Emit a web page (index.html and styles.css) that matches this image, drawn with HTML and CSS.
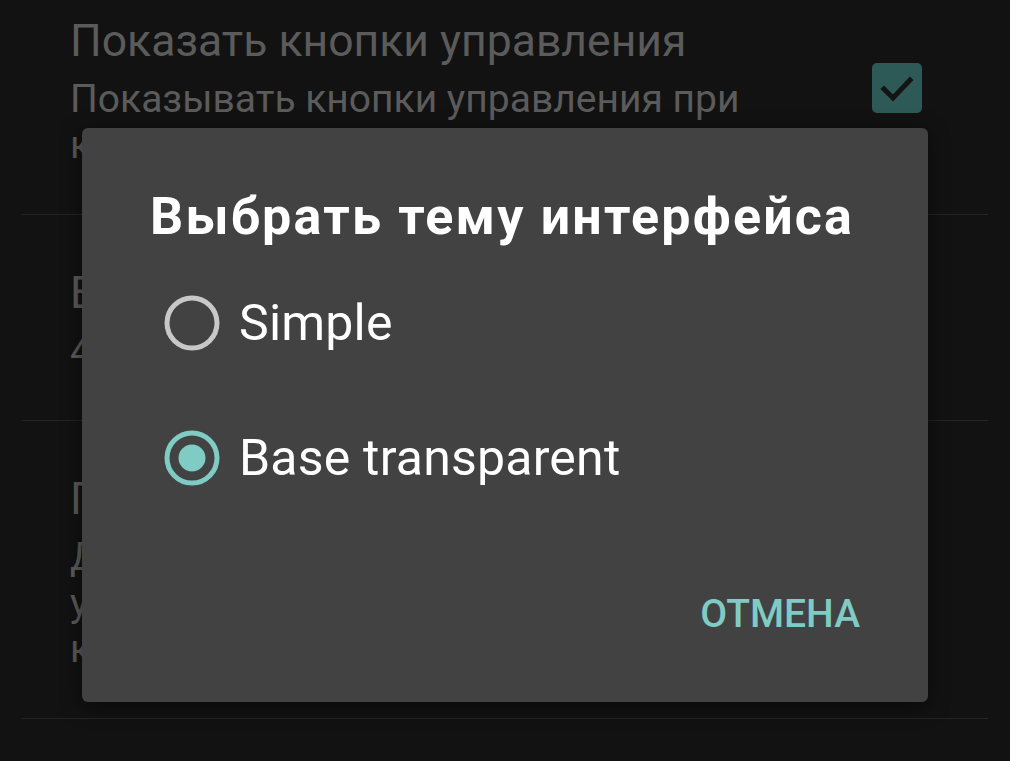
FILE: index.html
```html
<!DOCTYPE html>
<html lang="ru">
<head>
<meta charset="utf-8">
<title>Выбрать тему интерфейса</title>
<link rel="stylesheet" href="styles.css">
</head>
<body>
<div class="screen">
  <div class="settings">
    <div class="item">
      <div class="item-text">
        <div class="item-title">Показать кнопки управления</div>
        <div class="item-summary">Показывать кнопки управления при<br>касании экрана</div>
      </div>
      <div class="checkbox">
        <svg viewBox="0 0 50 50" width="50" height="50"><path d="M12 26 L21 35 L38 17" fill="none" stroke="#141414" stroke-width="5" stroke-linecap="square"/></svg>
      </div>
    </div>
    <div class="item">
      <div class="item-text">
        <div class="item-title">Выбрать тему интерфейса</div>
        <div class="item-summary">4 темы</div>
      </div>
    </div>
    <div class="item">
      <div class="item-text">
        <div class="item-title">Плавающие кнопки</div>
        <div class="item-summary">Дублировать кнопки<br>управления на экране<br>клавиатуры</div>
      </div>
    </div>
  </div>

  <div class="dialog">
    <div class="dialog-title">Выбрать тему интерфейса</div>
    <div class="options">
      <div class="option">
        <svg class="radio" viewBox="0 0 60 60" width="60" height="60"><circle cx="30" cy="30" r="25" fill="none" stroke="#c8c8c8" stroke-width="5"/></svg>
        <span class="option-label">Simple</span>
      </div>
      <div class="option">
        <svg class="radio" viewBox="0 0 60 60" width="60" height="60"><circle cx="30" cy="30" r="25" fill="none" stroke="#80cbc4" stroke-width="5"/><circle cx="30" cy="30" r="13.5" fill="#80cbc4"/></svg>
        <span class="option-label">Base transparent</span>
      </div>
    </div>
    <div class="actions">
      <span class="action">ОТМЕНА</span>
    </div>
  </div>
</div>
</body>
</html>
```
FILE: styles.css
```css
html, body {
  margin: 0;
  padding: 0;
  background: #121212;
}
body {
  font-family: Roboto, "Noto Sans", sans-serif;
  width: 1010px;
  height: 761px;
  overflow: hidden;
}
.screen {
  position: relative;
  width: 1010px;
  height: 761px;
  overflow: hidden;
}
.settings {
  margin-top: -37px;
  display: flex;
  flex-direction: column;
}
.item {
  margin: 0 22px;
  padding: 52px 66px 46px 48px;
  border-bottom: 1px solid #242424;
  display: flex;
  align-items: center;
}
.item-text {
  flex: 1;
}
.item-title {
  font-size: 44.5px;
  line-height: 52px;
  color: #5b5b5b;
  white-space: nowrap;
}
.item-summary {
  margin-top: 9px;
  font-size: 39px;
  line-height: 46px;
  color: #5b5b5b;
  white-space: nowrap;
}
.checkbox {
  width: 50px;
  height: 50px;
  margin-bottom: 7px;
  border-radius: 5px;
  background: #2d5a57;
  display: flex;
}
.dialog {
  position: absolute;
  left: 82px;
  top: 128px;
  width: 846px;
  height: 574px;
  box-sizing: border-box;
  padding-top: 59px;
  background: #424242;
  border-radius: 6px;
  box-shadow: 0 4px 20px rgba(0,0,0,0.5);
}
.dialog-title {
  padding-left: 68px;
  font-size: 52px;
  line-height: 60px;
  font-weight: 700;
  letter-spacing: 2.2px;
  color: #ffffff;
  white-space: nowrap;
}
.options {
  margin-top: 8px;
  display: flex;
  flex-direction: column;
}
.option {
  height: 135px;
  padding-left: 80px;
  display: flex;
  align-items: center;
  gap: 17px;
}
.radio {
  flex: none;
}
.option-label {
  font-size: 50px;
  letter-spacing: 0.2px;
  color: #ffffff;
}
.actions {
  margin-top: 65px;
  padding-right: 68px;
  display: flex;
  justify-content: flex-end;
}
.action {
  font-size: 39px;
  line-height: 48px;
  font-weight: 500;
  color: #80cbc4;
}
```
